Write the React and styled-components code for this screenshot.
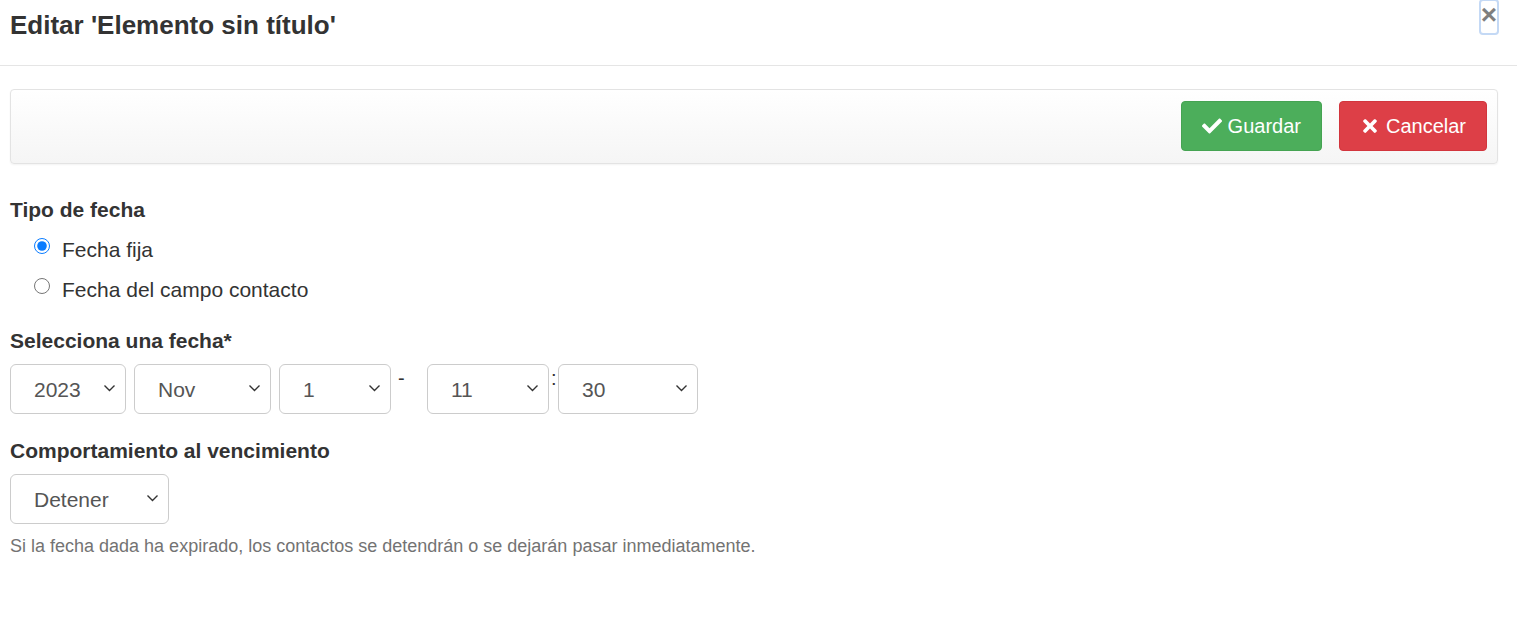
import React from "react";
import styled, { createGlobalStyle } from "styled-components";
import { FaCheck, FaTimes } from "react-icons/fa";

const GlobalStyle = createGlobalStyle`
	*, *::before, *::after {
		box-sizing: border-box;
	}
	body {
		margin: 0;
		background: #fff;
		font-family: "Liberation Sans", Arial, sans-serif;
		color: #333;
	}
`;

const Header = styled.div`
	display: flex;
	justify-content: space-between;
	align-items: flex-start;
	height: 66px;
	padding: 0 18px 0 10px;
	border-bottom: 1px solid #e5e5e5;
`;

const Title = styled.h4`
	margin: 8px 0 0;
	font-size: 26px;
	line-height: 34px;
	font-weight: 700;
	color: #333;
`;

const CloseButton = styled.button`
	width: 20px;
	height: 36px;
	padding: 0;
	margin-top: -1px;
	border: 2px solid #8ab4ec;
	border-radius: 4px;
	background: transparent;
	color: #000;
	opacity: 0.5;
	font-family: "Liberation Sans", Arial, sans-serif;
	font-size: 28px;
	font-weight: 700;
	line-height: 36px;
	display: flex;
	justify-content: center;
	align-items: flex-end;
	overflow: hidden;
`;

const Body = styled.div`
	padding: 23px 19px 0 10px;
`;

const Toolbar = styled.div`
	display: flex;
	justify-content: flex-end;
	gap: 17px;
	height: 75px;
	padding: 11px 10px 12px;
	border: 1px solid #e3e3e3;
	border-radius: 4px;
	background: linear-gradient(to bottom, #fff 0%, #f5f5f5 100%);
	box-shadow: 0 1px 2px rgba(0, 0, 0, 0.05);
`;

const ActionButton = styled.button`
	display: flex;
	align-items: center;
	gap: 6px;
	height: 50px;
	padding: 0 20px;
	border: 1px solid ${(p) => p.$border};
	border-radius: 4px;
	background: ${(p) => p.$bg};
	color: #fff;
	font-family: "Liberation Sans", Arial, sans-serif;
	font-size: 20px;
	cursor: pointer;

	svg {
		width: 20px;
		height: 20px;
	}
`;

const Section = styled.div`
	margin-top: ${(p) => p.$top || 0}px;
`;

const Label = styled.div`
	font-size: 21px;
	font-weight: 700;
	line-height: 28px;
	color: #333;
`;

const RadioList = styled.div`
	padding-top: 6px;
`;

const RadioRow = styled.label`
	display: flex;
	align-items: center;
	height: 40px;
	padding-left: 24px;
	font-size: 21px;
	color: #333;
`;

const Radio = styled.input`
	width: 16px;
	height: 16px;
	margin: -8px 12px 0 0;
	accent-color: #0a7cff;
`;

const SelectRow = styled.div`
	display: flex;
	align-items: flex-start;
	margin-top: 9px;
`;

const SelectWrap = styled.div`
	position: relative;
	flex: none;
	width: ${(p) => p.$w}px;
	margin-right: ${(p) => p.$gap || 0}px;
`;

const Select = styled.select`
	appearance: none;
	width: 100%;
	height: 50px;
	padding: 0 30px 0 23px;
	border: 1px solid #ccc;
	border-radius: 6px;
	background: #fff;
	color: #555;
	font-family: "Liberation Sans", Arial, sans-serif;
	font-size: 21px;
`;

const Chevron = styled.svg`
	position: absolute;
	right: 10px;
	top: 19px;
	width: 13px;
	height: 10px;
	pointer-events: none;
`;

const Separator = styled.span`
	flex: none;
	width: ${(p) => p.$w}px;
	font-size: 20px;
	line-height: 28px;
	color: #333;
	padding-left: ${(p) => p.$pad || 0}px;
`;

const Help = styled.p`
	margin: 11px 0 0;
	font-size: 18px;
	line-height: 22px;
	color: #737373;
`;

const Dropdown = ({ width, gap, value }) => (
	<SelectWrap $w={width} $gap={gap}>
		<Select defaultValue={value}>
			<option>{value}</option>
		</Select>
		<Chevron viewBox="0 0 13 10">
			<path d="M1.5 2.5 L6.5 7.5 L11.5 2.5" fill="none" stroke="#333" strokeWidth="1.4" />
		</Chevron>
	</SelectWrap>
);

export default function App() {
	return (
		<>
			<GlobalStyle />
			<Header>
				<Title>Editar 'Elemento sin título'</Title>
				<CloseButton>×</CloseButton>
			</Header>
			<Body>
				<Toolbar>
					<ActionButton $bg="#4cae5b" $border="#45a352">
						<FaCheck /> Guardar
					</ActionButton>
					<ActionButton $bg="#dd3f47" $border="#d2353d">
						<FaTimes /> Cancelar
					</ActionButton>
				</Toolbar>

				<Section $top={32}>
					<Label>Tipo de fecha</Label>
					<RadioList>
						<RadioRow>
							<Radio type="radio" name="tipo" defaultChecked />
							Fecha fija
						</RadioRow>
						<RadioRow>
							<Radio type="radio" name="tipo" />
							Fecha del campo contacto
						</RadioRow>
					</RadioList>
				</Section>

				<Section $top={17}>
					<Label>Selecciona una fecha*</Label>
					<SelectRow>
						<Dropdown width={116} gap={8} value="2023" />
						<Dropdown width={137} gap={8} value="Nov" />
						<Dropdown width={112} value="1" />
						<Separator $w={36} $pad={7}>-</Separator>
						<Dropdown width={122} value="11" />
						<Separator $w={9} $pad={2}>:</Separator>
						<Dropdown width={140} value="30" />
					</SelectRow>
				</Section>

				<Section $top={23}>
					<Label>Comportamiento al vencimiento</Label>
					<SelectRow>
						<Dropdown width={159} value="Detener" />
					</SelectRow>
					<Help>
						Si la fecha dada ha expirado, los contactos se detendrán o se dejarán pasar inmediatamente.
					</Help>
				</Section>
			</Body>
		</>
	);
}
